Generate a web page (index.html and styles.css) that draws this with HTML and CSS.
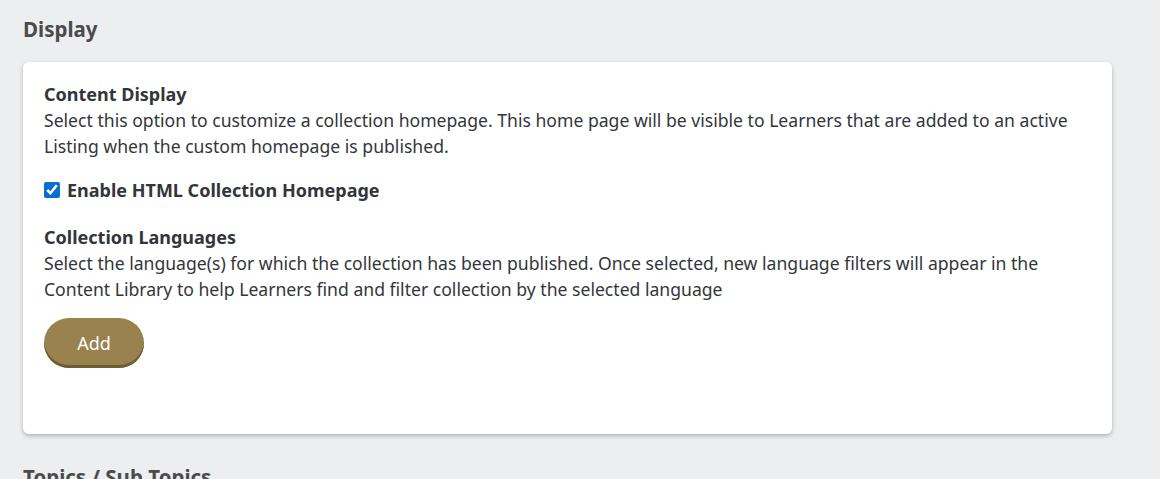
FILE: index.html
```html
<!DOCTYPE html>
<html>
<head>
	<title>Display</title>
<link rel="stylesheet" href="styles.css">
</head>
<body>

<div class="page">
	<h2 class="section-title">Display</h2>
	<div class="card">
		<h3 class="field-title">Content Display</h3>
		<p class="field-text">Select this option to customize a collection homepage. This home page will be visible to Learners that are added to an active Listing when the custom homepage is published.</p>
		<label class="check-row">
			<input type="checkbox" checked>
			<span>Enable HTML Collection Homepage</span>
		</label>
		<h3 class="field-title">Collection Languages</h3>
		<p class="field-text">Select the language(s) for which the collection has been published. Once selected, new language filters will appear in the Content Library to help Learners find and filter collection by the selected language</p>
		<button class="btn-add" type="button">Add</button>
	</div>
	<h2 class="section-title">Topics / Sub Topics</h2>
</div>

</body>
</html>
```

FILE: styles.css
```css
*{box-sizing: border-box;}

body{margin: 0;background: #edeef0;font-family: "Noto Sans", "Open Sans", sans-serif;color: #32363a;}

.page{padding: 14px 48px 0 23px;}

.section-title{margin: 0 0 18px 0;font-size: 20.5px;font-weight: bold;color: #4b4b4b;line-height: 30px;}

.card{width: 1089px;background: #fff;border-radius: 6px;box-shadow: 0 2px 4px rgba(0,0,0,0.25);padding: 19px 21px 66px 21px;margin-bottom: 28px;}

.field-title{margin: 0;font-size: 18px;font-weight: bold;line-height: 26px;}
.field-text{margin: 0;font-size: 17.6px;line-height: 26px;}

.check-row{display: flex;align-items: center;gap: 7px;margin: 19px 0 22px 0;font-size: 18px;font-weight: bold;}
.check-row input{margin: 0;width: 16px;height: 16px;accent-color: #0a6ed1;}

.btn-add{margin-top: 16px;width: 100px;height: 50px;border: none;border-radius: 25px;background: #9a824f;box-shadow: inset 0 -3px 0 #6f5c33;color: #fff;font-family: inherit;font-size: 18px;padding-bottom: 2px;}
```
